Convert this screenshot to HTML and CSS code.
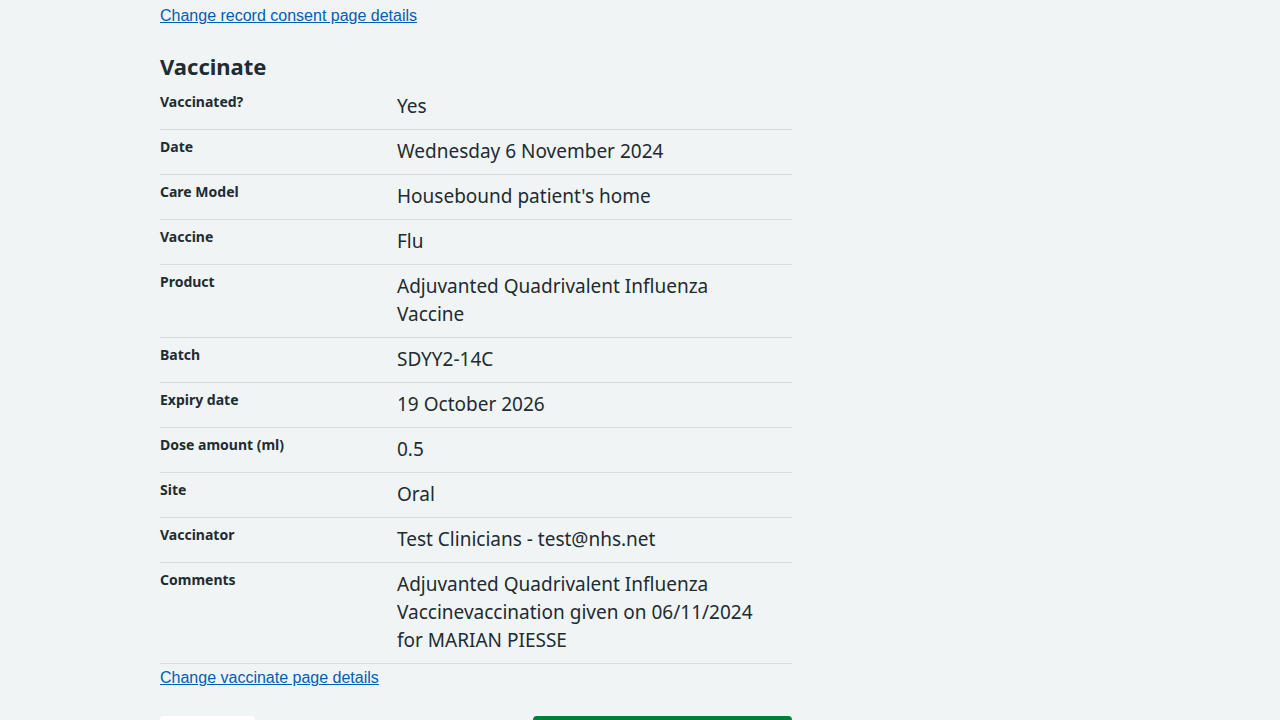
FILE: index.html
```html
<!DOCTYPE html>
<html lang="en">
<head>
<meta charset="utf-8">
<title>Check and confirm</title>
<link rel="stylesheet" href="styles.css">
</head>
<body>
<main class="page">
  <a class="link" href="#">Change record consent page details</a>
  <h2 class="heading">Vaccinate</h2>
  <dl class="summary">
    <div class="row"><dt class="key">Vaccinated?</dt><dd class="value">Yes</dd></div>
    <div class="row"><dt class="key">Date</dt><dd class="value">Wednesday 6 November 2024</dd></div>
    <div class="row"><dt class="key">Care Model</dt><dd class="value">Housebound patient's home</dd></div>
    <div class="row"><dt class="key">Vaccine</dt><dd class="value">Flu</dd></div>
    <div class="row"><dt class="key">Product</dt><dd class="value">Adjuvanted Quadrivalent Influenza Vaccine</dd></div>
    <div class="row"><dt class="key">Batch</dt><dd class="value">SDYY2-14C</dd></div>
    <div class="row"><dt class="key">Expiry date</dt><dd class="value">19 October 2026</dd></div>
    <div class="row"><dt class="key">Dose amount (ml)</dt><dd class="value">0.5</dd></div>
    <div class="row"><dt class="key">Site</dt><dd class="value">Oral</dd></div>
    <div class="row"><dt class="key">Vaccinator</dt><dd class="value">Test Clinicians - test@nhs.net</dd></div>
    <div class="row"><dt class="key">Comments</dt><dd class="value">Adjuvanted Quadrivalent Influenza Vaccinevaccination given on 06/11/2024 for MARIAN PIESSE</dd></div>
  </dl>
  <a class="link link-after" href="#">Change vaccinate page details</a>
  <div class="actions">
    <button class="btn btn-secondary" type="button">Back</button>
    <button class="btn btn-primary" type="button">Confirm and save</button>
  </div>
</main>
</body>
</html>
```
FILE: styles.css
```css
html, body {
  margin: 0;
  padding: 0;
  background: #f0f4f5;
  color: #212b32;
  font-family: "Noto Sans", sans-serif;
}
.page {
  width: 632px;
  margin-left: 160px;
  padding-top: 4px;
}
.link {
  display: block;
  width: max-content;
  font-family: "Liberation Sans", Arial, sans-serif;
  font-size: 16px;
  line-height: 24px;
  color: #005eb8;
  text-decoration: underline;
}
.link-after {
  margin-top: 2px;
}
.heading {
  margin: 22px 0 3px;
  font-size: 22px;
  line-height: 32px;
  font-weight: 700;
}
.summary {
  margin: 0;
}
.row {
  display: grid;
  grid-template-columns: 237px 1fr;
  border-bottom: 1px solid #d8dde0;
}
.key {
  margin: 0;
  padding: 5px 0 8px;
  font-size: 14px;
  line-height: 24px;
  font-weight: 700;
}
.value {
  margin: 0;
  padding: 7px 16px 9px 0;
  font-size: 19px;
  line-height: 28px;
}
.actions {
  display: flex;
  justify-content: space-between;
  margin-top: 26px;
}
.btn {
  border: 0;
  border-radius: 4px;
  font-family: "Noto Sans", sans-serif;
  font-size: 19px;
  font-weight: 600;
  line-height: 24px;
  padding: 12px 16px;
}
.btn-secondary {
  width: 95px;
  background: #ffffff;
  color: #005eb8;
}
.btn-primary {
  width: 259px;
  background: #007f3b;
  color: #ffffff;
}
```
